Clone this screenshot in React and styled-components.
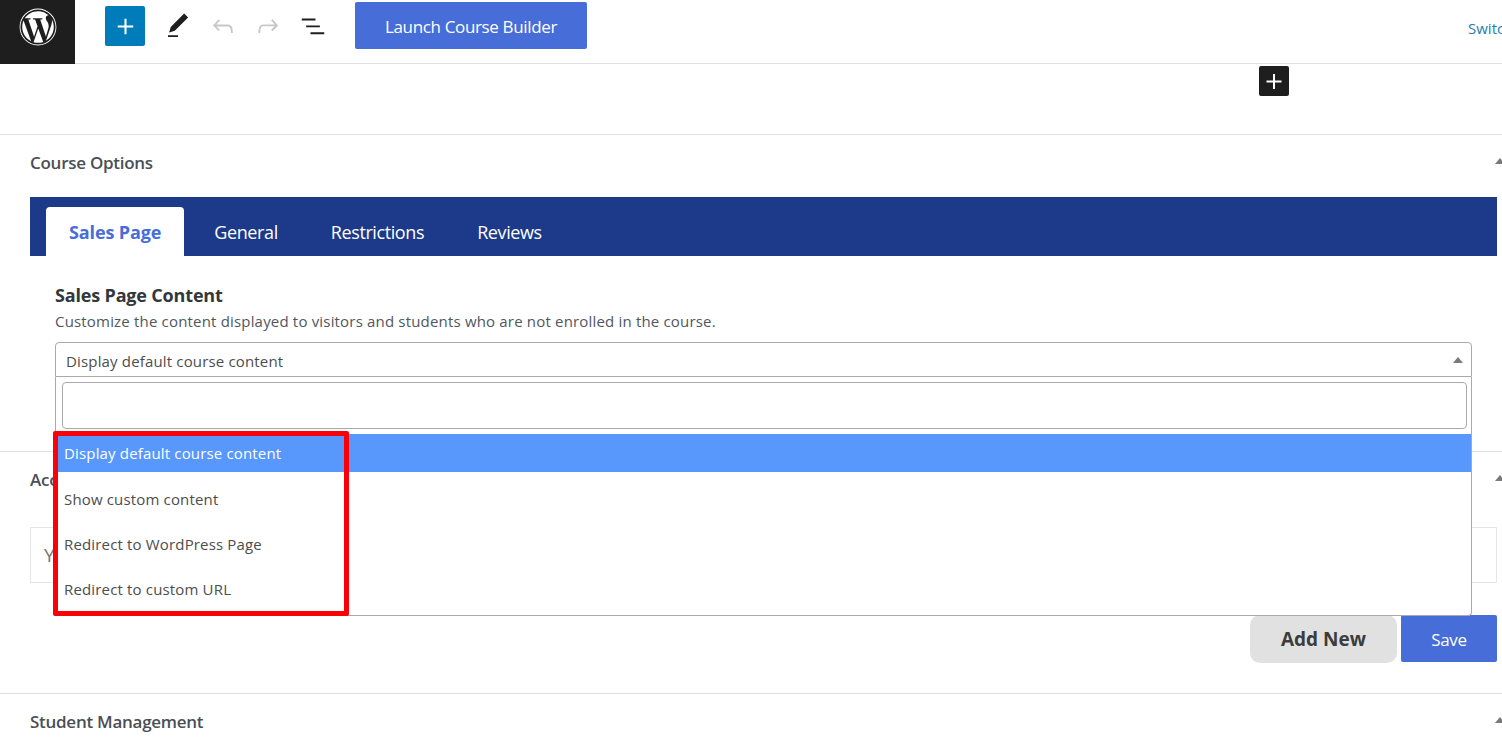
import React from "react";
import styled, { createGlobalStyle } from "styled-components";
import { FaWordpress } from "react-icons/fa";

const Global = createGlobalStyle`
  html, body { margin: 0; padding: 0; background: #fff; }
  body { font-family: "Open Sans", "Noto Sans", sans-serif; color: #3c434a; }
  * { box-sizing: border-box; }
`;

const Page = styled.div`
  position: relative;
  width: 1502px;
  height: 750px;
  overflow: hidden;
  background: #fff;
`;

const TopBar = styled.header`
  display: flex;
  align-items: flex-start;
  height: 64px;
  border-bottom: 1px solid #e0e0e0;
`;

const LogoBox = styled.div`
  width: 75px;
  height: 64px;
  flex: none;
  background: #1e1e1e;
  color: #fff;
  display: flex;
  align-items: center;
  justify-content: center;
  padding-bottom: 10px;
`;

const Tools = styled.div`
  display: flex;
  align-items: center;
  height: 52px;
  margin-left: 30px;
`;

const Inserter = styled.div`
  width: 40px;
  height: 40px;
  margin-right: 10px;
  border-radius: 2px;
  background: #007cba;
  color: #fff;
  display: flex;
  align-items: center;
  justify-content: center;
`;

const ToolIcon = styled.div`
  width: 45px;
  height: 40px;
  display: flex;
  align-items: center;
  justify-content: center;
  color: ${(p) => (p.$muted ? "#c8c8c8" : "#1e1e1e")};
`;

const LaunchButton = styled.button`
  margin: 2px 0 0 20px;
  padding: 2px 0 0;
  width: 232px;
  height: 47px;
  border: 0;
  border-radius: 2px;
  background: #466dd8;
  color: #fff;
  font: 400 17px "Open Sans", sans-serif;
  letter-spacing: -0.35px;
`;

const SwitchLink = styled.a`
  margin: 18px 0 0 auto;
  width: 34px;
  overflow: hidden;
  white-space: nowrap;
  color: #1f7ea8;
  font-size: 15px;
  line-height: 20px;
`;

const BlockCanvas = styled.div`
  height: 71px;
  border-bottom: 1px solid #e0e0e0;
`;

const FloatingAdd = styled.div`
  position: absolute;
  left: 1259px;
  top: 66px;
  width: 30px;
  height: 30px;
  border-radius: 2px;
  background: #1e1e1e;
  color: #fff;
  display: flex;
  align-items: center;
  justify-content: center;
`;

const Panel = styled.section`
  position: relative;
  height: ${(p) => p.$height}px;
  padding: 0 5px 0 30px;
  border-bottom: ${(p) => (p.$last ? "0" : "1px solid #e0e0e0")};
`;

const PanelTitle = styled.h2`
  margin: 0;
  height: 56px;
  padding-top: 17px;
  font-size: 17px;
  line-height: 22px;
  font-weight: 600;
  letter-spacing: -0.27px;
  color: #4a4f55;
`;

const Caret = styled.span`
  position: absolute;
  width: 0;
  height: 0;
  border-left: 5px solid transparent;
  border-right: 5px solid transparent;
  border-bottom: 6px solid #7a7a7a;
  right: ${(p) => p.$right}px;
  top: ${(p) => p.$top}px;
`;

const TabBar = styled.nav`
  display: flex;
  align-items: flex-end;
  height: 59px;
  margin-top: 6px;
  padding-left: 16px;
  background: #1c3a89;
`;

const Tab = styled.div`
  height: 49px;
  padding: 0 ${(p) => p.$pad}px;
  margin-right: ${(p) => (p.$active ? "3.5px" : "0")};
  display: flex;
  align-items: center;
  border-radius: 4px 4px 0 0;
  font-size: 18px;
  letter-spacing: ${(p) => (p.$active ? "-0.12px" : "-0.4px")};
  font-weight: ${(p) => (p.$active ? 700 : 400)};
  color: ${(p) => (p.$active ? "#466dd8" : "#fff")};
  background: ${(p) => (p.$active ? "#fff" : "transparent")};
`;

const FieldArea = styled.div`
  padding: 27px 25px 0;
`;

const FieldTitle = styled.h3`
  margin: 0;
  font-size: 18px;
  line-height: 24px;
  font-weight: 700;
  letter-spacing: -0.17px;
  color: #32373c;
`;

const FieldHelp = styled.p`
  margin: 4px 0 0;
  font-size: 15px;
  line-height: 20px;
  letter-spacing: 0.18px;
  color: #50575e;
`;

const SelectWrap = styled.div`
  position: relative;
  margin-top: 11px;
  z-index: 2;
`;

const SelectBox = styled.div`
  height: 35px;
  padding: 2px 10px 0;
  display: flex;
  align-items: center;
  border: 1px solid #aaa;
  border-radius: 4px 4px 0 0;
  background: #fff;
  font-size: 15px;
  letter-spacing: 0.16px;
  color: #4d4d4d;
`;

const Dropdown = styled.div`
  position: absolute;
  left: 0;
  right: 0;
  top: 35px;
  height: 239px;
  background: #fff;
  border: 1px solid #aaa;
  border-top: 0;
  border-radius: 0 0 4px 4px;
`;

const SearchField = styled.div`
  height: 47px;
  margin: 5px 4px 5px 6px;
  border: 1px solid #aaa;
  border-radius: 4px;
`;

const Option = styled.div`
  height: ${(p) => p.$h}px;
  padding-left: 8px;
  display: flex;
  align-items: center;
  font-size: 15px;
  letter-spacing: 0.16px;
  color: ${(p) => (p.$selected ? "#fff" : "#4d4d4d")};
  background: ${(p) => (p.$selected ? "#5897fb" : "transparent")};
`;

const RedMark = styled.div`
  position: absolute;
  left: 53px;
  top: 431px;
  width: 296px;
  height: 185px;
  border: 5px solid #fa0007;
  border-radius: 2px;
  z-index: 3;
`;

const PlanBox = styled.div`
  height: 56px;
  margin-top: 19px;
  padding-left: 13px;
  display: flex;
  align-items: center;
  border: 1px solid #e5e5e5;
  font-size: 19px;
  color: #777;
`;

const ActionRow = styled.div`
  display: flex;
  align-items: flex-start;
  justify-content: flex-end;
  gap: 4px;
  margin-top: 32px;
`;

const AddButton = styled.button`
  width: 147px;
  height: 48px;
  border: 0;
  border-radius: 10px;
  background: #e1e1e1;
  color: #3c3c3c;
  font: 700 19px "Open Sans", sans-serif;
`;

const SaveButton = styled.button`
  width: 96px;
  height: 47px;
  padding: 2px 0 0;
  border: 0;
  border-radius: 2px;
  background: #466dd8;
  color: #fff;
  font: 400 17px "Open Sans", sans-serif;
  letter-spacing: -0.3px;
`;

const Icon = ({ size = 30, d }) => (
  <svg width={size} height={size} viewBox="0 0 24 24" fill="currentColor" aria-hidden="true">
    <path d={d} />
  </svg>
);

const PLUS = "M18 11.2h-5.2V6h-1.6v5.2H6v1.6h5.2V18h1.6v-5.2H18z";
const PEN = "M20.1 5.1L16.9 2 6.2 12.7l-1.3 4.4 4.5-1.3L20.1 5.1zM4 20.8h8v-1.5H4v1.5z";
const UNDO = "M18.3 11.7c-.6-.6-1.4-.9-2.3-.9H6.7l2.9-3.3-1.1-1-4.5 5L8.5 16l1-1-2.7-2.7H16c.5 0 .9.2 1.3.5 1 1 1 3.4 1 4.5v.3h1.5v-.2c0-1.5 0-4.3-1.5-5.7z";
const REDO = "M15.6 6.5l-1.1 1 2.9 3.3H8c-.9 0-1.7.3-2.3.9-1.4 1.5-1.4 4.2-1.4 5.6v.2h1.5v-.3c0-1.1 0-3.5 1-4.5.3-.3.7-.5 1.3-.5h9.2L14.5 15l1.1 1.1 4.6-4.6-4.6-5z";
const LIST = "M3 6h11v1.5H3V6Zm3.5 5.5h11V13h-11v-1.5ZM10 17h11v1.5H10V17Z";

export default function App() {
  return (
    <Page>
      <Global />
      <TopBar>
        <LogoBox>
          <FaWordpress size={38} />
        </LogoBox>
        <Tools>
          <Inserter><Icon size={31} d={PLUS} /></Inserter>
          <ToolIcon><Icon d={PEN} /></ToolIcon>
          <ToolIcon $muted><Icon d={UNDO} /></ToolIcon>
          <ToolIcon $muted><Icon d={REDO} /></ToolIcon>
          <ToolIcon><Icon d={LIST} /></ToolIcon>
        </Tools>
        <LaunchButton>Launch Course Builder</LaunchButton>
        <SwitchLink>Switch to Draft</SwitchLink>
      </TopBar>
      <BlockCanvas />
      <FloatingAdd><Icon size={31} d={PLUS} /></FloatingAdd>

      <Panel $height={317}>
        <PanelTitle>Course Options</PanelTitle>
        <Caret $right={-3} $top={23} />
        <TabBar>
          <Tab $active $pad={23}>Sales Page</Tab>
          <Tab $pad={26.5}>General</Tab>
          <Tab $pad={26.5}>Restrictions</Tab>
          <Tab $pad={26.5}>Reviews</Tab>
        </TabBar>
        <FieldArea>
          <FieldTitle>Sales Page Content</FieldTitle>
          <FieldHelp>Customize the content displayed to visitors and students who are not enrolled in the course.</FieldHelp>
          <SelectWrap>
            <SelectBox>Display default course content</SelectBox>
            <Caret $right={9} $top={15} />
            <Dropdown>
              <SearchField />
              <Option $selected $h={38}>Display default course content</Option>
              <Option $h={54}>Show custom content</Option>
              <Option $h={36}>Redirect to WordPress Page</Option>
              <Option $h={54}>Redirect to custom URL</Option>
            </Dropdown>
          </SelectWrap>
        </FieldArea>
      </Panel>

      <Panel $height={242}>
        <PanelTitle>Access Plans</PanelTitle>
        <Caret $right={-3} $top={23} />
        <PlanBox>You</PlanBox>
        <ActionRow>
          <AddButton>Add New</AddButton>
          <SaveButton>Save</SaveButton>
        </ActionRow>
      </Panel>

      <Panel $height={60} $last>
        <PanelTitle>Student Management</PanelTitle>
        <Caret $right={-3} $top={23} />
      </Panel>

      <RedMark />
    </Page>
  );
}
